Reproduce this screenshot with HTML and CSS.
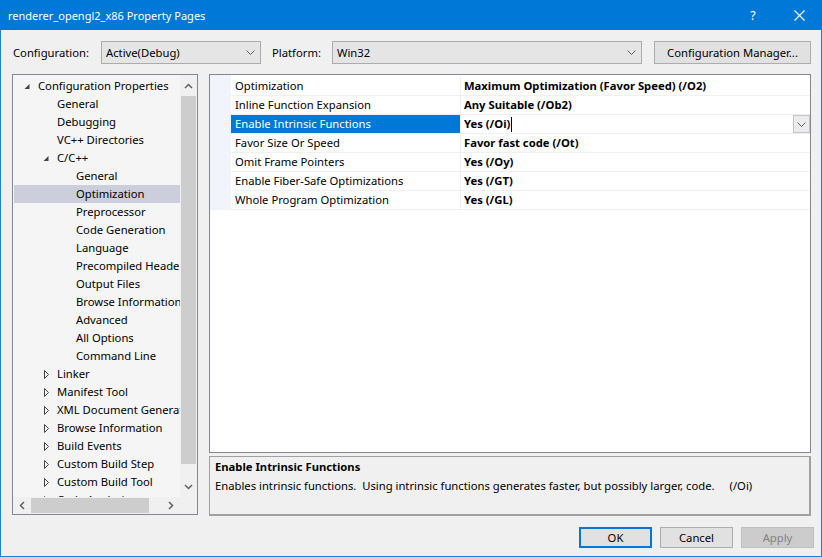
FILE: index.html
```html
<!DOCTYPE html>
<html>
<head>
<meta charset="utf-8">
<title>renderer_opengl2_x86 Property Pages</title>
<link rel="stylesheet" href="styles.css">
</head>
<body>
<div class="window">
  <div class="titlebar">
    <div class="title">renderer_opengl2_x86 Property Pages</div>
    <div class="tb-btn help">?</div>
    <div class="tb-btn close">
      <svg width="11" height="11" viewBox="0 0 11 11"><path d="M0.5 0.5 L10.5 10.5 M10.5 0.5 L0.5 10.5" stroke="#fff" stroke-width="1.1" fill="none"/></svg>
    </div>
  </div>

  <div class="toolbar">
    <div class="lbl lbl-config">Configuration:</div>
    <div class="combo combo-config"><span class="combo-text">Active(Debug)</span><svg class="chev" width="9" height="5" viewBox="0 0 9 5"><path d="M0.5 0.5 L4.5 4.5 L8.5 0.5" stroke="#606060" fill="none"/></svg></div>
    <div class="lbl lbl-platform">Platform:</div>
    <div class="combo combo-platform"><span class="combo-text">Win32</span><svg class="chev" width="9" height="5" viewBox="0 0 9 5"><path d="M0.5 0.5 L4.5 4.5 L8.5 0.5" stroke="#606060" fill="none"/></svg></div>
    <div class="btn btn-manager">Configuration Manager...</div>
  </div>

  <div class="main">
    <div class="tree">
      <div class="tree-top">
        <div class="tree-content">
          <div class="node l1"><span class="twisty"><svg width="14" height="18" viewBox="0 0 14 18"><polygon points="5.5,7 5.5,12 0.5,12" fill="#444"/></svg></span>Configuration Properties</div>
          <div class="node l2"><span class="twisty"></span>General</div>
          <div class="node l2"><span class="twisty"></span>Debugging</div>
          <div class="node l2"><span class="twisty"></span>VC++ Directories</div>
          <div class="node l2"><span class="twisty"><svg width="14" height="18" viewBox="0 0 14 18"><polygon points="5.5,7 5.5,12 0.5,12" fill="#444"/></svg></span>C/C++</div>
          <div class="node l3"><span class="twisty"></span>General</div>
          <div class="node l3 selected"><span class="twisty"></span>Optimization</div>
          <div class="node l3"><span class="twisty"></span>Preprocessor</div>
          <div class="node l3"><span class="twisty"></span>Code Generation</div>
          <div class="node l3"><span class="twisty"></span>Language</div>
          <div class="node l3"><span class="twisty"></span>Precompiled Headers</div>
          <div class="node l3"><span class="twisty"></span>Output Files</div>
          <div class="node l3"><span class="twisty"></span>Browse Information</div>
          <div class="node l3"><span class="twisty"></span>Advanced</div>
          <div class="node l3"><span class="twisty"></span>All Options</div>
          <div class="node l3"><span class="twisty"></span>Command Line</div>
          <div class="node l2"><span class="twisty"><svg width="14" height="18" viewBox="0 0 14 18"><polygon points="1.5,5.5 5.5,9.5 1.5,13.5" fill="none" stroke="#444"/></svg></span>Linker</div>
          <div class="node l2"><span class="twisty"><svg width="14" height="18" viewBox="0 0 14 18"><polygon points="1.5,5.5 5.5,9.5 1.5,13.5" fill="none" stroke="#444"/></svg></span>Manifest Tool</div>
          <div class="node l2"><span class="twisty"><svg width="14" height="18" viewBox="0 0 14 18"><polygon points="1.5,5.5 5.5,9.5 1.5,13.5" fill="none" stroke="#444"/></svg></span>XML Document Generator</div>
          <div class="node l2"><span class="twisty"><svg width="14" height="18" viewBox="0 0 14 18"><polygon points="1.5,5.5 5.5,9.5 1.5,13.5" fill="none" stroke="#444"/></svg></span>Browse Information</div>
          <div class="node l2"><span class="twisty"><svg width="14" height="18" viewBox="0 0 14 18"><polygon points="1.5,5.5 5.5,9.5 1.5,13.5" fill="none" stroke="#444"/></svg></span>Build Events</div>
          <div class="node l2"><span class="twisty"><svg width="14" height="18" viewBox="0 0 14 18"><polygon points="1.5,5.5 5.5,9.5 1.5,13.5" fill="none" stroke="#444"/></svg></span>Custom Build Step</div>
          <div class="node l2"><span class="twisty"><svg width="14" height="18" viewBox="0 0 14 18"><polygon points="1.5,5.5 5.5,9.5 1.5,13.5" fill="none" stroke="#444"/></svg></span>Custom Build Tool</div>
          <div class="node l2"><span class="twisty"><svg width="14" height="18" viewBox="0 0 14 18"><polygon points="1.5,5.5 5.5,9.5 1.5,13.5" fill="none" stroke="#444"/></svg></span>Code Analysis</div>
        </div>
        <div class="vscroll">
          <div class="sb-arrow"><svg width="9" height="6" viewBox="0 0 9 6"><path d="M1 5 L4.5 1.5 L8 5" stroke="#606060" stroke-width="1.5" fill="none"/></svg></div>
          <div class="vthumb"></div>
          <div class="sb-fill"></div>
          <div class="sb-arrow"><svg width="9" height="6" viewBox="0 0 9 6"><path d="M1 1 L4.5 4.5 L8 1" stroke="#606060" stroke-width="1.5" fill="none"/></svg></div>
        </div>
      </div>
      <div class="tree-bottom">
        <div class="hscroll">
          <div class="sb-harrow"><svg width="6" height="9" viewBox="0 0 6 9"><path d="M5 1 L1.5 4.5 L5 8" stroke="#606060" stroke-width="1.5" fill="none"/></svg></div>
          <div class="hthumb"></div>
          <div class="sb-fill"></div>
          <div class="sb-harrow"><svg width="6" height="9" viewBox="0 0 6 9"><path d="M1 1 L4.5 4.5 L1 8" stroke="#606060" stroke-width="1.5" fill="none"/></svg></div>
        </div>
        <div class="corner"></div>
      </div>
    </div>

    <div class="right">
      <div class="grid">
        <div class="rows">
          <div class="prow"><div class="gutter"></div><div class="pname">Optimization</div><div class="pval">Maximum Optimization (Favor Speed) (/O2)</div></div>
          <div class="prow"><div class="gutter"></div><div class="pname">Inline Function Expansion</div><div class="pval">Any Suitable (/Ob2)</div></div>
          <div class="prow active"><div class="gutter"></div><div class="pname">Enable Intrinsic Functions</div><div class="pval"><span>Yes (/Oi)</span><span class="caret"></span><span class="spacer"></span><span class="dd"><svg width="9" height="5" viewBox="0 0 9 5"><path d="M0.5 0.5 L4.5 4.5 L8.5 0.5" stroke="#606060" fill="none"/></svg></span></div></div>
          <div class="prow"><div class="gutter"></div><div class="pname">Favor Size Or Speed</div><div class="pval">Favor fast code (/Ot)</div></div>
          <div class="prow"><div class="gutter"></div><div class="pname">Omit Frame Pointers</div><div class="pval">Yes (/Oy)</div></div>
          <div class="prow"><div class="gutter"></div><div class="pname">Enable Fiber-Safe Optimizations</div><div class="pval">Yes (/GT)</div></div>
          <div class="prow"><div class="gutter"></div><div class="pname">Whole Program Optimization</div><div class="pval">Yes (/GL)</div></div>
        </div>
      </div>
      <div class="desc">
        <div class="desc-title">Enable Intrinsic Functions</div>
        <div class="desc-text">Enables intrinsic functions.&nbsp; Using intrinsic functions generates faster, but possibly larger, code.<span class="desc-flag">(/Oi)</span></div>
      </div>
    </div>
  </div>

  <div class="buttons">
    <div class="btn dlg default">OK</div>
    <div class="btn dlg">Cancel</div>
    <div class="btn dlg disabled">Apply</div>
  </div>
</div>
</body>
</html>
```

FILE: styles.css
```css
* { box-sizing: border-box; }
html, body { margin: 0; padding: 0; }
body {
  width: 822px;
  height: 557px;
  overflow: hidden;
  background: #f0f0f0;
  font-family: "Noto Sans", "Open Sans", sans-serif;
  font-size: 11.25px;
  color: #000;
}
.window {
  width: 822px;
  height: 557px;
  border: 1px solid #1883d7;
  border-top: none;
  display: flex;
  flex-direction: column;
  background: #f0f0f0;
}

/* title bar */
.titlebar {
  height: 30px;
  flex: none;
  margin: 0 -1px;
  background: #0078d7;
  color: #fff;
  display: flex;
  align-items: center;
  padding-left: 8px;
  font-size: 11px;
}
.title { flex: 1; }
.tb-btn {
  width: 46px;
  height: 30px;
  display: flex;
  align-items: center;
  justify-content: center;
}
.help { font-size: 12.5px; }

/* toolbar */
.toolbar {
  height: 44px;
  flex: none;
  display: flex;
  align-items: flex-start;
  padding: 11px 0 0 12px;
}
.lbl { height: 23px; line-height: 23px; flex: none; }
.lbl-config { width: 88px; }
.lbl-platform { width: 60px; margin-left: 11px; }
.combo {
  height: 23px;
  flex: none;
  border: 1px solid #acacac;
  background: #e5e5e5;
  display: flex;
  align-items: center;
  padding: 0 5px 0 4px;
}
.combo-text { flex: 1; }
.combo-config { width: 160px; }
.combo-platform { width: 310px; }
.btn {
  height: 23px;
  flex: none;
  border: 1px solid #adadad;
  background: #e1e1e1;
  display: flex;
  align-items: center;
  justify-content: center;
}
.btn-manager { width: 157px; margin-left: 12px; }

/* main area */
.main {
  height: 442px;
  flex: none;
  display: flex;
  gap: 11px;
  padding: 0 10px 0 11px;
}
.tree {
  width: 186px;
  height: 441px;
  flex: none;
  border: 1px solid #828790;
  display: flex;
  flex-direction: column;
  background: #f5f5f5;
}
.tree-top { display: flex; height: 422px; flex: none; }
.tree-bottom { display: flex; height: 17px; flex: none; }
.tree-content {
  width: 167px;
  flex: none;
  overflow: hidden;
  padding-top: 2px;
  white-space: nowrap;
}
.node {
  height: 18px;
  line-height: 18px;
  display: flex;
  align-items: center;
}
.node.l1 { padding-left: 11px; }
.node.l2 { padding-left: 30px; }
.node.l3 { padding-left: 49px; }
.node.selected { background: #cccedb; margin-left: 1px; padding-left: 48px; }
.twisty { width: 14px; height: 18px; flex: none; display: block; }
.twisty svg { display: block; }

.vscroll {
  width: 17px;
  flex: none;
  background: #f0f0f0;
  display: flex;
  flex-direction: column;
}
.sb-arrow {
  height: 21px;
  flex: none;
  display: flex;
  align-items: center;
  justify-content: center;
}
.vthumb {
  height: 368px;
  flex: none;
  margin: 0 1px;
  background: #cdcdcd;
}
.sb-fill { flex: 1 1 auto; }
.hscroll {
  width: 167px;
  flex: none;
  background: #f0f0f0;
  display: flex;
}
.sb-harrow {
  width: 18px;
  flex: none;
  display: flex;
  align-items: center;
  justify-content: center;
}
.hthumb {
  width: 118px;
  flex: none;
  margin: 1px 0;
  background: #cdcdcd;
}
.corner { width: 17px; flex: none; background: #f0f0f0; }

/* right column */
.right {
  width: 602px;
  flex: none;
  display: flex;
  flex-direction: column;
  gap: 3px;
}
.grid {
  height: 379px;
  flex: none;
  border: 1px solid #828790;
  background: #fff;
}
.rows {
  padding-top: 2px;
  background: linear-gradient(to right, #f1f4fa 21px, #fff 21px);
  background-repeat: no-repeat;
  background-size: 100% 136px;
}
.prow {
  display: flex;
  height: 19px;
}
.gutter { width: 21px; flex: none; }
.pname {
  width: 230px;
  flex: none;
  height: 19px;
  line-height: 18px;
  padding-left: 4px;
  border-right: 1px solid #f0f0f0;
  border-bottom: 1px solid #f0f0f0;
  white-space: nowrap;
}
.pval {
  flex: 1;
  height: 19px;
  line-height: 18px;
  padding-left: 3px;
  font-weight: bold;
  border-bottom: 1px solid #f0f0f0;
  white-space: nowrap;
  display: flex;
  align-items: flex-start;
}
.prow.active .pname {
  background: #0078d7;
  background-clip: padding-box;
  color: #fff;
}
.caret {
  width: 1px;
  height: 15px;
  margin-top: 2px;
  margin-left: 1px;
  background: #000;
}
.spacer { flex: 1; }
.dd {
  width: 17px;
  height: 18px;
  border: 1px solid #c5c5c5;
  background: #ececec;
  display: flex;
  align-items: center;
  justify-content: center;
}

.desc {
  height: 60px;
  flex: none;
  border: 1px solid #a0a0a0;
  border-right-width: 2px;
  border-bottom-width: 2px;
  padding-left: 5px;
  line-height: 19px;
}
.desc-title { font-weight: bold; }
.desc-flag { margin-left: 15px; }

/* bottom buttons */
.buttons {
  display: flex;
  justify-content: flex-end;
  gap: 8px;
  padding: 11px 7px 0 0;
}
.btn.dlg { width: 73px; height: 21px; }
.btn.default { border: 2px solid #0078d7; }
.btn.disabled { background: #cccccc; border-color: #bfbfbf; color: #838383; }
```
